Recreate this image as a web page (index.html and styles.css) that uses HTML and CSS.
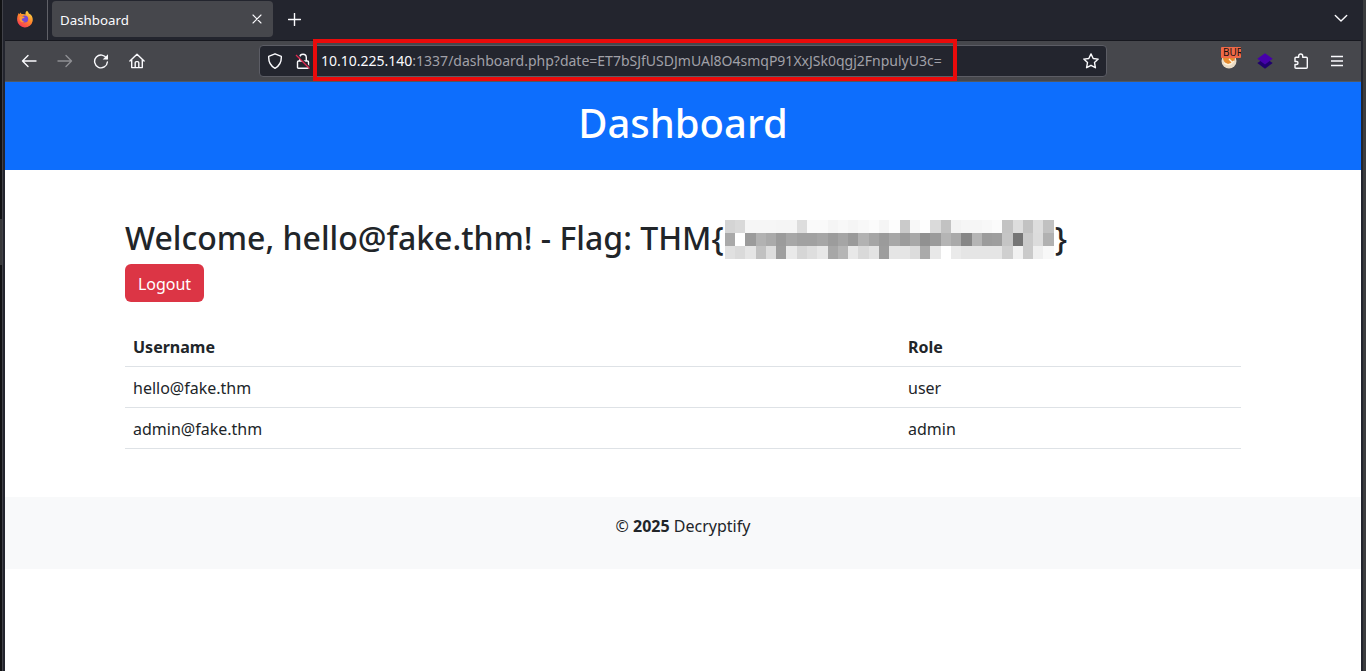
FILE: index.html
```html
<!DOCTYPE html>
<html lang="en">
<head>
<meta charset="utf-8">
<title>Dashboard</title>
<link rel="stylesheet" href="styles.css">
</head>
<body>
<div class="edge-left"></div>
<div class="window">
  <div class="tabbar">
    <div class="brand">
      <svg width="18" height="18" viewBox="0 0 18 18">
        <defs>
          <linearGradient id="fox" x1="0.8" y1="0" x2="0.2" y2="1"><stop offset="0" stop-color="#ffe14a"/><stop offset=".45" stop-color="#ff8a2a"/><stop offset="1" stop-color="#f5305a"/></linearGradient>
        </defs>
        <path fill="url(#fox)" d="M11 .8c1 .8 1.500 1.700 1.800 2.600 1.300.4 2.400 1.300 3 2.500.8 1.600 1.200 3.500.8 5.300A7.800 7.800 0 0 1 1.200 10.500C.9 7.800 1.500 5.300 2.800 3l.8 1.200L4.500 2.600l1 1.500c1.500-.3 3 0 4 .4C9.300 3 9.800 1.600 11 .8z"/>
        <circle cx="8.700" cy="9" r="3.500" fill="#7448d6"/>
        <path fill="#ff9b34" d="M4 6.500c1.500-.7 3-.4 4.700.8-.9 1.200-2 1-3 1.800.2 1.700 1.300 2.500 3 2.700-2.500 1.300-5.300-.5-5.200-3z"/>
      </svg>
    </div>
    <div class="tab"><span>Dashboard</span>
      <svg width="10" height="10" viewBox="0 0 10 10"><path d="M1 1l8 8M9 1L1 9" class="line"/></svg>
    </div>
    <svg class="newtab" width="13" height="13" viewBox="0 0 13 13"><path d="M6.500.5v12M.5 6.500h12" class="line bold"/></svg>
    <svg class="alltabs" width="14" height="9" viewBox="0 0 14 9"><path d="M1.300 1.500L7 7l5.700-5.500" class="line bold"/></svg>
  </div>
  <div class="toolbar">
    <svg class="nav" width="16" height="16" viewBox="0 0 16 16"><path d="M15 8H1.500M7 2.500L1.500 8 7 13.500" class="line bold"/></svg>
    <svg class="nav dim" width="16" height="16" viewBox="0 0 16 16"><path d="M1 8h13.500M9 2.500L14.500 8 9 13.500" class="line bold"/></svg>
    <svg class="nav" width="16" height="16" viewBox="0 0 16 16"><path d="M13.700 5.500A6.400 6.400 0 1 0 14.400 9" class="line bold"/><path d="M15 1.200v5.300H9.700z" fill="#fbfbfe"/></svg>
    <svg class="nav" width="16" height="16" viewBox="0 0 16 16"><path d="M.9 8L8 1.200 15.100 8M2.700 6.700v7.900h10.600V6.700M6.200 14.400V9.800c0-.8.5-1.200 1.200-1.200h1.200c.7 0 1.200.4 1.200 1.200v4.600" class="line bold"/></svg>
    <div class="urlbar">
      <svg class="shield" width="16" height="16" viewBox="0 0 16 16"><path d="M8 .8l6.300 2.500c.3 5.200-1.300 9.300-6.300 12-5-2.700-6.600-6.800-6.300-12z" class="line bold"/></svg>
      <svg class="lock" width="16" height="16" viewBox="0 0 16 16"><path d="M3.500 8h9q1 0 1 1v5.300q0 .9-1 .9h-9q-1 0-1-.9V9q0-1 1-1zM4.700 8V4.500a3.300 3.300 0 0 1 6.600 0V8" class="line bold"/><path d="M2.500 2l13 13" stroke="#23252e" stroke-width="1.500"/><path d="M1 2l13.500 13.500" stroke="#e22850" stroke-width="1.300"/></svg>
      <div class="address"><b>10.10.225.140</b>:1337/dashboard.php?date=ET7bSJfUSDJmUAl8O4smqP91XxJSk0qgj2FnpulyU3c=</div>
      <svg class="star" width="16" height="16" viewBox="0 0 16 16"><path d="M8 .9l2.200 4.600 5 .6-3.700 3.500.9 5.100L8 12.300l-4.400 2.400.9-5.100L.8 6.100l5-.6z" class="line bold"/></svg>
      <div class="highlight"></div>
    </div>
    <div class="extensions">
      <div class="burp">
        <svg width="18" height="18" viewBox="0 0 18 18"><circle cx="9" cy="9" r="7.500" fill="#eadbc5"/><path d="M3 5h12c0 5-3 8-7 7-3-1-5-3-5-7z" fill="#e68a2d"/><path d="M4 11q5 4 10-2M9 7l3 3" fill="none" stroke="#fff2d9" stroke-width="1.300"/></svg>
        <span>BUR</span>
      </div>
      <svg width="16" height="16" viewBox="0 0 16 16"><path d="M.3 10L8 5l7.700 5L8 15.700z" fill="#20006f"/><path d="M.3 5.800L8 .3l7.700 5.500L8 11.500z" fill="#4700ab"/></svg>
      <svg width="16" height="16" viewBox="0 0 16 16"><path d="M2 8.500V5.300q0-1 1-1h2.700V3a2 2 0 0 1 4 0v1.300h3.600q1 0 1 1v9q0 .9-1 .9H3q-1 0-1-.9v-2.800h1.500a1.500 1.500 0 0 0 0-3z" class="line bold"/></svg>
      <svg width="12" height="12" viewBox="0 0 12 12"><path d="M0 1.500h12M0 6h12M0 10.500h12" class="line bold"/></svg>
    </div>
  </div>
  <div class="page">
    <header class="banner"><h1>Dashboard</h1></header>
    <main class="container">
      <h2>Welcome, hello@fake.thm! - Flag: THM{<span class="mosaic" id="mosaic"></span>}</h2>
      <a class="btn">Logout</a>
      <table>
        <thead><tr><th class="user-col">Username</th><th>Role</th></tr></thead>
        <tbody>
          <tr><td>hello@fake.thm</td><td>user</td></tr>
          <tr><td>admin@fake.thm</td><td>admin</td></tr>
        </tbody>
      </table>
    </main>
    <footer>© <strong>2025</strong> Decryptify</footer>
  </div>
</div>
<div class="edge-right"></div>
<script src="mosaic.js"></script>
</body>
</html>
```
FILE: styles.css
```css
* { box-sizing: border-box; }
body { margin: 0; height: 671px; overflow: hidden; display: flex; background: #23252e; font-family: "Noto Sans", sans-serif; }
svg { display: block; flex: none; }
.line { fill: none; stroke: #fbfbfe; stroke-width: 1.1; stroke-linecap: round; stroke-linejoin: round; }
.bold { stroke-width: 1.4; }
.edge-left { width: 5px; flex: none; background: linear-gradient(90deg, transparent 2px, #414249 2px, #414249 3px, #23252e 3px), linear-gradient(#111214 219px, #37383a 219px, #37383a 265px, #111214 265px); }
.edge-right { width: 5px; flex: none; background: linear-gradient(90deg, #23252e 2px, #3b3c3e 2px); }
.window { width: 1356px; height: 671px; flex: none; }
.tabbar { height: 41px; display: flex; background: #23252e; border-bottom: 1px solid #17181f; color: #fbfbfe; }
.brand { width: 43px; padding: 10px 0 0 11px; border-right: 1px solid #606168; }
.tab { width: 221px; height: 36px; margin: 1px 0 0 4px; padding: 0 11px 0 8px; display: flex; align-items: center; justify-content: space-between; background: #46474c; border-radius: 4px; font-size: 13.3px; }
.tab span { padding-top: 2px; }
.newtab { margin: 13px 0 0 15px; }
.alltabs { margin: 14px 13px 0 auto; }
.toolbar { height: 41px; display: flex; align-items: center; background: #46474c; padding-left: 16px; border-bottom: 1px solid #515860; }
.nav { margin-right: 20px; }
.dim { opacity: .4; }
.urlbar { position: relative; width: 848px; height: 32px; margin-left: 94px; padding: 0 7px; display: flex; align-items: center; background: #23252e; border: 1px solid #5c5d65; border-radius: 4px; }
.lock { margin-left: 12px; }
.address { margin-left: 10px; color: #a1a1a8; font-size: 14px; line-height: 20px; white-space: nowrap; }
.address b { color: #fbfbfe; font-weight: 400; }
.star { margin-left: auto; }
.highlight { position: absolute; left: 53px; top: -7px; width: 644px; height: 42px; border: 4px solid #ea0b0b; }
.extensions { display: flex; align-items: center; margin-left: 113px; gap: 21px; }
.extensions > :nth-child(2) { margin-left: -6px; }
.extensions > :nth-child(3) { margin-left: -1px; }
.extensions > :nth-child(4) { margin-left: 1px; }
.burp { position: relative; width: 22px; height: 18px; }
.burp span { position: absolute; left: 1px; top: -5px; width: 20px; height: 11px; overflow: hidden; background: #ef6948; color: #17110f; font-size: 10px; line-height: 11px; padding-left: 2px; border-radius: 1px; }
.page { height: 589px; background: #fff; color: #212529; font-size: 16px; line-height: 24px; }
.banner { height: 88px; padding: 17px 0 15px; background: #0d6efd; color: #fff; text-align: center; }
h1 { margin: 0; font-size: 40px; line-height: 48px; font-weight: 500; }
.container { width: 1116px; margin: 0 auto; padding: 49px 0 48px; }
h2 { display: flex; margin: 0 0 7px; font-size: 32px; line-height: 38px; height: 38px; font-weight: 500; white-space: nowrap; }
.mosaic { display: grid; grid-template-columns: repeat(32, 1fr); grid-template-rows: repeat(3, 13px); width: 329px; height: 39px; margin: 1px 1px -2px; }
.btn { display: block; width: 79px; height: 38px; padding: 8px 0 6px; text-align: center; color: #fff; background: #dc3545; border-radius: 6px; }
table { width: 100%; margin-top: 24px; border-spacing: 0; }
th, td { height: 41px; padding: 9px 8px 7px; text-align: left; border-bottom: 1px solid #dee2e6; }
.user-col { width: 775px; }
footer { height: 72px; padding-top: 17px; text-align: center; background: #f8f9fa; }
```
FILE: mosaic.js
```js
// Grey levels of the redaction blocks, one row per line.
const rows = [
  "d4 d9 f6 f6 f6 f5 f5 dd fa fa f5 f8 f5 f8 fb f5 fd ca f8 fe da c2 f3 f6 f6 f8 fb c3 dd c2 dd c1",
  "a9 ff 9b b2 aa 9b a7 a1 a1 a6 9c a5 9a b2 a5 9b a7 9c a8 91 9b b5 aa 87 b5 9c 9e c5 75 ca dc b1",
  "e0 da e5 c1 dd 9e e9 d6 de e7 a7 b5 e8 d9 e3 9d e5 e5 dc aa e8 ff ea e5 e5 e5 e5 cf f1 ca ef f8"
];
const mosaic = document.getElementById("mosaic");
for (const level of rows.join(" ").split(" ")) {
  const cell = document.createElement("i");
  cell.style.background = "#" + level.repeat(3);
  mosaic.appendChild(cell);
}
```
